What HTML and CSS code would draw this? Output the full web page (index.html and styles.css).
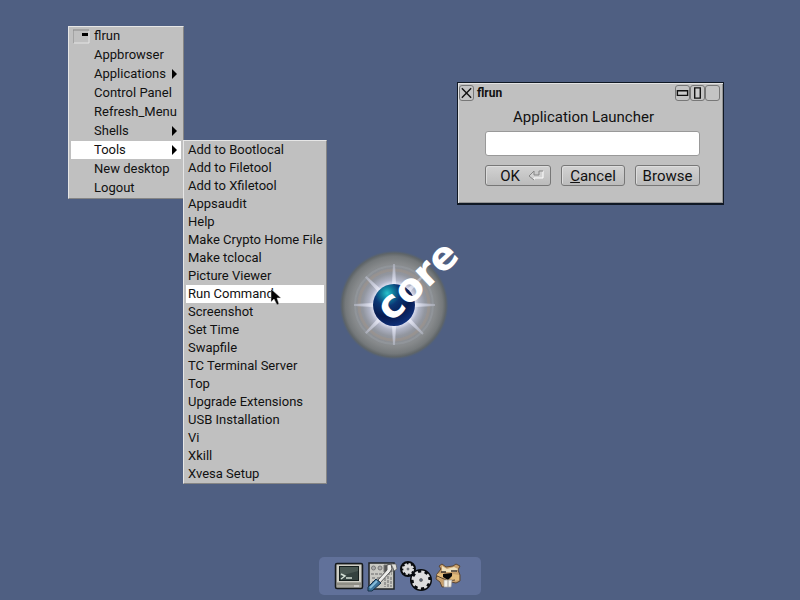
FILE: index.html
```html
<!DOCTYPE html>
<html lang="en">
<head>
<meta charset="utf-8">
<title>Core desktop</title>
<link rel="stylesheet" href="styles.css">
</head>
<body>
<main class="desktop">
  <svg class="logo" width="150" height="150" viewBox="0 0 150 150" role="img" aria-label="core">
    <defs>
      <radialGradient id="disc">
        <stop offset="0" stop-color="#fff"/>
        <stop offset=".38" stop-color="#dfe1f4"/>
        <stop offset=".46" stop-color="#b0b4c6"/>
        <stop offset=".58" stop-color="#92969f"/>
        <stop offset=".78" stop-color="#86898b"/>
        <stop offset=".9" stop-color="#75797b"/>
        <stop offset=".96" stop-color="#5f6568"/>
        <stop offset="1" stop-color="#536177" stop-opacity=".5"/>
      </radialGradient>
      <radialGradient id="ball" cx=".34" cy=".22" r=".8">
        <stop offset="0" stop-color="#27c3cc"/>
        <stop offset=".18" stop-color="#107f9e"/>
        <stop offset=".38" stop-color="#0b3675"/>
        <stop offset=".7" stop-color="#071b50"/>
        <stop offset="1" stop-color="#102f78"/>
      </radialGradient>
      <radialGradient id="ray" gradientUnits="userSpaceOnUse" cx="59" cy="90" r="42">
        <stop offset=".45" stop-color="#f2f3ff"/>
        <stop offset=".7" stop-color="#c6c9d8"/>
        <stop offset="1" stop-color="#a9acb6" stop-opacity=".8"/>
      </radialGradient>
    </defs>
    <circle cx="59" cy="90" r="54" fill="url(#disc)"/>
    <circle cx="59" cy="90" r="35" fill="none" stroke="#aa9684" stroke-width="3" opacity=".35"/>
    <circle cx="59" cy="90" r="39" fill="none" stroke="#a3a8af" stroke-width="2" opacity=".3"/>
    <g fill="url(#ray)">
      <path id="beam" d="M56 90L58 49h2l2 41-2 40h-2z"/>
      <path d="M56 90L58 49h2l2 41-2 40h-2z" transform="rotate(45 59 90)"/>
      <path d="M56 90L58 49h2l2 41-2 40h-2z" transform="rotate(90 59 90)"/>
      <path d="M56 90L58 49h2l2 41-2 40h-2z" transform="rotate(135 59 90)"/>
    </g>
    <circle cx="59" cy="90" r="21" fill="url(#ball)"/>
    <text class="logo-text" transform="translate(59 105) rotate(-43)" x="-4" y="0">core</text>
  </svg>

  <nav class="menu root-menu" aria-label="Root menu">
    <div class="menu-title"><svg width="17" height="15" viewBox="0 0 17 15"><path d="M0 14V1h16" fill="none" stroke="#888"/><path d="M1 14h15V2" fill="none" stroke="#e4e4e4"/><path d="M9 4h6v3H9z"/></svg>flrun</div>
    <button class="item">Appbrowser</button>
    <button class="item sub">Applications</button>
    <button class="item">Control Panel</button>
    <button class="item">Refresh_Menu</button>
    <button class="item sub">Shells</button>
    <button class="item sub active">Tools</button>
    <button class="item">New desktop</button>
    <button class="item">Logout</button>
  </nav>

  <nav class="menu tools-menu" aria-label="Tools">
    <button class="item">Add to Bootlocal</button>
    <button class="item">Add to Filetool</button>
    <button class="item">Add to Xfiletool</button>
    <button class="item">Appsaudit</button>
    <button class="item">Help</button>
    <button class="item">Make Crypto Home File</button>
    <button class="item">Make tclocal</button>
    <button class="item">Picture Viewer</button>
    <button class="item active">Run Command</button>
    <button class="item">Screenshot</button>
    <button class="item">Set Time</button>
    <button class="item">Swapfile</button>
    <button class="item">TC Terminal Server</button>
    <button class="item">Top</button>
    <button class="item">Upgrade Extensions</button>
    <button class="item">USB Installation</button>
    <button class="item">Vi</button>
    <button class="item">Xkill</button>
    <button class="item">Xvesa Setup</button>
  </nav>

  <section class="window" aria-label="flrun">
    <header class="titlebar">
      <button class="frame-button" aria-label="Close"><svg width="14" height="14" viewBox="0 0 14 14"><path d="M2 2l10 10M12 2L2 12" stroke="#111" stroke-width="1.5"/></svg></button>
      <h1 class="title">flrun</h1>
      <div class="frame-buttons">
        <button class="frame-button" aria-label="Shade"><svg width="14" height="14" viewBox="0 0 14 14"><path d="M1.500 4.500h11v5h-11z" fill="#ccc" stroke="#111" stroke-width="1.500"/></svg></button>
        <button class="frame-button" aria-label="Maximize height"><svg width="14" height="14" viewBox="0 0 14 14"><path d="M4 1.500h6v11H4z" fill="#ccc" stroke="#111" stroke-width="1.500"/></svg></button>
        <button class="frame-button" aria-label="Minimize"></button>
      </div>
    </header>
    <form class="launcher">
      <label for="command">Application Launcher</label>
      <input id="command" class="command" type="text">
      <div class="actions">
        <button class="push ok" type="button">OK<svg width="17" height="11" viewBox="0 0 17 11"><path d="M6 1L1 6l5 4V8h9V1h-4v4H6z" fill="#d2d2d2"/><path d="M6 10V8h9V1" fill="none" stroke="#fff"/><path d="M6 1L1 6l5 4M6 1v4h5V1h4" fill="none" stroke="#858585"/></svg></button>
        <button class="push" type="button"><u>C</u>ancel</button>
        <button class="push" type="button">Browse</button>
      </div>
    </form>
  </section>

  <svg class="pointer" width="12" height="18" viewBox="0 0 12 18"><path d="M1 1v13l3-3 3 6 2-1-2-6h4z" fill="#050505" stroke="#ddd" stroke-width=".5"/></svg>

  <footer class="dock">
    <button class="launch" aria-label="Terminal">
      <svg width="32" height="32" viewBox="0 0 32 32">
        <rect x="2.500" y="3.500" width="27" height="25" rx="1.500" fill="#a6a59c" stroke="#161a1d" stroke-width="1.500"/>
        <path d="M4 5h24v17H4z" fill="#cfcfc6"/><path d="M6 6h20v15H6z" fill="#151e1c"/>
        <path d="M7 7h18v13H7z" fill="#34423f"/><path d="M7 7h18v4L7 16z" fill="#4a5853"/>
        <path d="M8 14l4 2-4 3M13 18h6" fill="none" stroke="#d2ded5" stroke-width="1.500"/>
        <path d="M4 24h24" stroke="#77766f"/><path d="M21 26h5" stroke="#eee"/>
      </svg>
    </button>
    <button class="launch" aria-label="Control panel">
      <svg width="32" height="32" viewBox="0 0 32 32">
        <path d="M3 3h25v26H3z" fill="#c9c9c3" stroke="#202428" stroke-width="1.500"/>
        <g fill="#aaa" stroke="#777"><circle cx="7.500" cy="8" r="2"/><circle cx="14" cy="8" r="2"/><path d="M18 5h8v7h-8z" fill="#555"/></g>
        <path d="M5 14h21M6 18h3M11 18h3M6 22h3M19 18v9M22 16v11M25 17v10" stroke="#888" stroke-width="1.500" stroke-dasharray="3 1"/>
        <path d="M12 20L21 10V5l4-1 1 5-2 3-10 11z" fill="#ececea" stroke="#555"/>
        <path d="M25 4h5l1 5-3 2-1-3z" fill="#deded9" stroke="#555" stroke-width=".7"/>
        <path d="M10 19l5 4L6 31H2v-4z" fill="#3b7299" stroke="#163047"/><path d="M11 21L4 28" stroke="#87bddb" stroke-width="2"/>
      </svg>
    </button>
    <button class="launch" aria-label="Run">
      <svg width="34" height="32" viewBox="0 0 34 32">
        <g stroke="#080a0d"><circle cx="9" cy="9" r="5.500" fill="#ddd" stroke-width="5"/><circle cx="22" cy="20" r="8" fill="#ddd" stroke-width="6"/></g>
        <g fill="#ddd" stroke="#ddd"><circle cx="9" cy="9" r="4.500" stroke-width="3" stroke-dasharray="2 1.530"/><circle cx="22" cy="20" r="7.500" stroke-width="4" stroke-dasharray="3 2.890"/></g>
        <circle cx="9" cy="9" r="4.500" fill="#ddd"/><circle cx="22" cy="20" r="7" fill="#ddd"/>
        <g fill="#4a596f" stroke="#777"><circle cx="9" cy="9" r="1"/><circle cx="22" cy="20" r="1.500"/></g>
      </svg>
    </button>
    <button class="launch" aria-label="Applications">
      <svg width="30" height="32" viewBox="0 0 30 32">
        <path d="M7 9L5 6l3-2 4 3 7-1 3-2 4 2-2 4 2 5v6l-4 2-5-1-1 4-8 1-2-5-4-3 1-5z" fill="#c8a06d" stroke="#5a4634"/>
        <path d="M8 6l5 3 7-2 4 2-2 3H8z" fill="#eee0bd"/><path d="M3 14l7-1v6l-6-1zM19 14l6 1v5l-5 1-4-3z" fill="#e2bb7c"/>
        <path d="M7 12h5M17 11h6" fill="none" stroke="#3b302a" stroke-width="1.500"/>
        <path d="M9 14l9-1v3l-4 4-5-3z" fill="#080808"/><path d="M3 16l7 3 4 2 7-1" fill="none" stroke="#55402e"/>
        <path d="M10 20h4v7h-4zM14 20h4l-1 7h-3z" fill="#f2f0e8" stroke="#aaa59c" stroke-width=".7"/>
      </svg>
    </button>
  </footer>
</main>
</body>
</html>
```
FILE: styles.css
```css
* { box-sizing: border-box; }

body {
  margin: 0;
  background: #4f5f82;
  color: #111;
  font-family: Roboto, "Liberation Sans", Arial, sans-serif;
  font-size: 13px;
}

button {
  margin: 0;
  padding: 0;
  border: 0;
  background: none;
  color: inherit;
  font: inherit;
}

svg { display: block; }

.desktop {
  position: relative;
  display: flex;
  flex-direction: column;
  justify-content: flex-end;
  align-items: center;
  min-height: 100vh;
  overflow: hidden;
}

.logo {
  position: absolute;
  left: 335px;
  top: 215px;
}

.logo-text {
  fill: #fff;
  font-family: "DejaVu Sans", sans-serif;
  font-size: 39px;
  font-weight: bold;
}

/* Menus */
.menu {
  position: absolute;
  display: flex;
  flex-direction: column;
  padding: 0 2px;
  border: 1px solid;
  border-color: #e6e6e6 #858585 #858585 #e6e6e6;
  background: #c0c0c0;
  line-height: 18px;
  white-space: nowrap;
}

.root-menu {
  left: 68px;
  top: 26px;
  min-width: 115px;
  padding-bottom: 1px;
}

.tools-menu {
  left: 183px;
  top: 140px;
  min-width: 144px;
}

.menu-title {
  display: flex;
  align-items: center;
  gap: 4px;
  padding-left: 2px;
}

.item {
  display: flex;
  align-items: center;
  justify-content: space-between;
  padding: 0 1px 0 2px;
  line-height: inherit;
  text-align: left;
}

.root-menu .item {
  margin-top: 1px;
  padding: 0 4px 0 23px;
}

.active { background: #fff; }

.sub::after {
  content: "";
  border: solid transparent;
  border-width: 5px 0 5px 5px;
  border-left-color: #000;
}

/* Launcher window */
.window {
  position: absolute;
  left: 457px;
  top: 82px;
  width: 267px;
  padding: 1px 3px 17px 1px;
  border: 1px solid #101824;
  border-bottom-width: 2px;
  background: #c0c0c0;
  box-shadow: inset 1px 1px #e2e2e2, inset -1px -1px #929292;
}

.titlebar {
  display: flex;
  align-items: center;
  gap: 3px;
  height: 17px;
}

.title {
  margin: 0;
  font-size: 12px;
  font-weight: bold;
}

.frame-buttons {
  display: flex;
  margin-left: auto;
}

.frame-button {
  width: 15px;
  height: 16px;
  border: 1px solid #777;
  border-radius: 3px;
  background: #c4c4c4;
}

.frame-button svg { width: 13px; }

.launcher {
  display: flex;
  flex-direction: column;
  padding: 8px 20px 0 26px;
  font-size: 15px;
}

.launcher label {
  padding-right: 18px;
  line-height: 17px;
  text-align: center;
}

.command {
  width: 100%;
  height: 25px;
  margin: 5px 0 9px;
  padding: 0 4px;
  border: 1px solid #999;
  border-radius: 3px;
  background: #fff;
  font: inherit;
}

.actions {
  display: grid;
  grid-template-columns: 66fr 64fr 65fr;
  gap: 10px;
}

.push {
  display: flex;
  align-items: center;
  justify-content: center;
  height: 21px;
  border: 1px solid #777;
  border-radius: 3px;
  background: linear-gradient(#d2d2d2, #bbb);
  box-shadow: inset 1px 1px #ddd;
}

.push.ok {
  justify-content: flex-end;
  gap: 8px;
  padding-right: 5px;
}

.pointer {
  position: absolute;
  left: 270px;
  top: 288px;
}

/* Dock */
.dock {
  display: flex;
  align-items: center;
  justify-content: center;
  gap: 1px;
  width: 162px;
  height: 38px;
  margin-bottom: 5px;
  padding-right: 4px;
  border-radius: 5px;
  background: #61719a;
}

.launch { flex: none; }
```
